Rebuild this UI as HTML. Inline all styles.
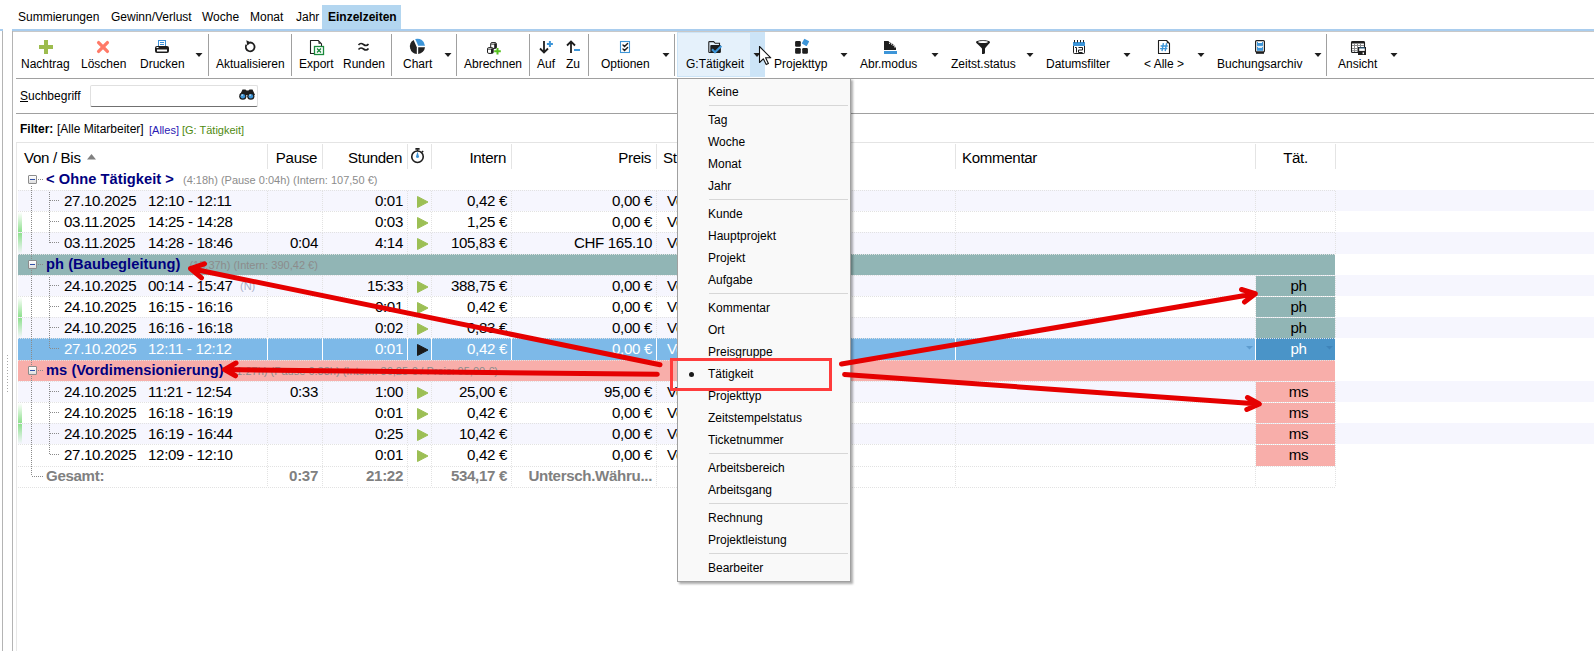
<!DOCTYPE html><html><head><meta charset="utf-8"><style>
*{box-sizing:border-box;margin:0;padding:0}
html,body{width:1594px;height:651px;overflow:hidden;background:#fff;font-family:'Liberation Sans',sans-serif;color:#000}
.a{position:absolute}
.t12{font-size:12px;line-height:14px;white-space:nowrap}
.g{font-size:15.1px;line-height:17px;white-space:nowrap;letter-spacing:-0.33px}
.r{text-align:right}
</style></head><body><div class="a " style="left:0px;top:29px;width:3px;height:2px;background:#a9cdee"></div>
<div class="a " style="left:2px;top:31px;width:1px;height:620px;background:#b4b4b4"></div>
<div class="a " style="left:12px;top:29px;width:1582px;height:2px;background:#a9cdee"></div>
<div class="a " style="left:12px;top:31px;width:1582px;height:1px;background:#c8c8c8"></div>
<div class="a " style="left:12px;top:31px;width:1px;height:620px;background:#b4b4b4"></div>
<div class="a " style="left:16px;top:142px;width:1px;height:509px;background:#e8e8e8"></div>
<div class="a " style="left:7px;top:355px;width:1px;height:38px;background:repeating-linear-gradient(180deg,#a8a8a8 0 1px,transparent 1px 3px)"></div>
<div class="a " style="left:322px;top:5px;width:79px;height:24px;background:#b3d6f0"></div>
<div class="a t12" style="left:18px;top:10px;">Summierungen</div>
<div class="a t12" style="left:111px;top:10px;">Gewinn/Verlust</div>
<div class="a t12" style="left:202px;top:10px;">Woche</div>
<div class="a t12" style="left:250px;top:10px;">Monat</div>
<div class="a t12" style="left:296px;top:10px;">Jahr</div>
<div class="a t12" style="left:328px;top:10px;font-weight:bold;">Einzelzeiten</div>
<div class="a " style="left:16px;top:78px;width:1578px;height:1px;background:#a0a0a0"></div>
<div class="a " style="left:208px;top:34px;width:1px;height:42px;background:#a0a0a0"></div>
<div class="a " style="left:291px;top:34px;width:1px;height:42px;background:#a0a0a0"></div>
<div class="a " style="left:391px;top:34px;width:1px;height:42px;background:#a0a0a0"></div>
<div class="a " style="left:456px;top:34px;width:1px;height:42px;background:#a0a0a0"></div>
<div class="a " style="left:529px;top:34px;width:1px;height:42px;background:#a0a0a0"></div>
<div class="a " style="left:588px;top:34px;width:1px;height:42px;background:#a0a0a0"></div>
<div class="a " style="left:674px;top:34px;width:1px;height:42px;background:#a0a0a0"></div>
<div class="a " style="left:1326px;top:34px;width:1px;height:42px;background:#a0a0a0"></div>
<div class="a " style="left:677px;top:32px;width:88px;height:45px;background:#e5f1fb;border:1px solid #cce4f7"></div>
<div class="a " style="left:750px;top:32px;width:15px;height:45px;background:#cce4f7"></div>
<div class="a t12" style="left:21px;top:57px;">Nachtrag</div>
<div class="a t12" style="left:81px;top:57px;">Löschen</div>
<div class="a t12" style="left:140px;top:57px;">Drucken</div>
<div class="a t12" style="left:216px;top:57px;">Aktualisieren</div>
<div class="a t12" style="left:299px;top:57px;">Export</div>
<div class="a t12" style="left:343px;top:57px;">Runden</div>
<div class="a t12" style="left:403px;top:57px;">Chart</div>
<div class="a t12" style="left:464px;top:57px;">Abrechnen</div>
<div class="a t12" style="left:537px;top:57px;">Auf</div>
<div class="a t12" style="left:566px;top:57px;">Zu</div>
<div class="a t12" style="left:601px;top:57px;">Optionen</div>
<div class="a t12" style="left:686px;top:57px;">G:Tätigkeit</div>
<div class="a t12" style="left:774px;top:57px;">Projekttyp</div>
<div class="a t12" style="left:860px;top:57px;">Abr.modus</div>
<div class="a t12" style="left:951px;top:57px;">Zeitst.status</div>
<div class="a t12" style="left:1046px;top:57px;">Datumsfilter</div>
<div class="a t12" style="left:1144px;top:57px;">&lt; Alle &gt;</div>
<div class="a t12" style="left:1217px;top:57px;">Buchungsarchiv</div>
<div class="a t12" style="left:1338px;top:57px;">Ansicht</div>
<svg class="a" style="left:195px;top:53px" width="8" height="5"><path d="M0.5 0H7.5L4 4Z" fill="#1e1e1e"/></svg>
<svg class="a" style="left:443.5px;top:53px" width="8" height="5"><path d="M0.5 0H7.5L4 4Z" fill="#1e1e1e"/></svg>
<svg class="a" style="left:661.5px;top:53px" width="8" height="5"><path d="M0.5 0H7.5L4 4Z" fill="#1e1e1e"/></svg>
<svg class="a" style="left:753px;top:53px" width="8" height="5"><path d="M0.5 0H7.5L4 4Z" fill="#1e1e1e"/></svg>
<svg class="a" style="left:839.5px;top:53px" width="8" height="5"><path d="M0.5 0H7.5L4 4Z" fill="#1e1e1e"/></svg>
<svg class="a" style="left:930.5px;top:53px" width="8" height="5"><path d="M0.5 0H7.5L4 4Z" fill="#1e1e1e"/></svg>
<svg class="a" style="left:1025.5px;top:53px" width="8" height="5"><path d="M0.5 0H7.5L4 4Z" fill="#1e1e1e"/></svg>
<svg class="a" style="left:1122.5px;top:53px" width="8" height="5"><path d="M0.5 0H7.5L4 4Z" fill="#1e1e1e"/></svg>
<svg class="a" style="left:1196.5px;top:53px" width="8" height="5"><path d="M0.5 0H7.5L4 4Z" fill="#1e1e1e"/></svg>
<svg class="a" style="left:1313.5px;top:53px" width="8" height="5"><path d="M0.5 0H7.5L4 4Z" fill="#1e1e1e"/></svg>
<svg class="a" style="left:1389.5px;top:53px" width="8" height="5"><path d="M0.5 0H7.5L4 4Z" fill="#1e1e1e"/></svg>

<svg class="a" style="left:0;top:0" width="1594" height="120">
<!-- plus -->
<path d="M44 40h4v5h5v4h-5v5h-4v-5h-5v-4h5z" fill="#9dbc4e"/>
<!-- X -->
<path d="M98.6 42.6L107.4 51.4M107.4 42.6L98.6 51.4" stroke="#ff7a68" stroke-width="3.3" stroke-linecap="round"/>
<!-- printer -->
<rect x="158.5" y="40.5" width="7" height="6" fill="#fff" stroke="#3a8fd8" stroke-width="1"/>
<path d="M160 42.5h4M160 44.5h4" stroke="#3a8fd8" stroke-width="1"/>
<rect x="155" y="46" width="14" height="7" rx="2" fill="#1e1e1e"/>
<rect x="157" y="49.5" width="10" height="2" fill="#fff"/>
<rect x="156.5" y="47" width="2" height="1" fill="#fff"/>
<!-- refresh -->
<path d="M250 42.5A4.4 4.4 0 1 1 246.4 44.6" fill="none" stroke="#1e1e1e" stroke-width="1.8"/>
<path d="M246.3 40.2L251.2 42.6L247.3 45.6Z" fill="#1e1e1e"/>
<!-- export doc -->
<path d="M314 53.5H310.5V40.5H318.2L321.5 43.8V46.5" fill="none" stroke="#1e1e1e" stroke-width="1.1" stroke-linejoin="round"/>
<path d="M318.5 41.5V43.8H320.8Z" fill="#1e1e1e"/>
<rect x="314.5" y="46.5" width="9" height="8" fill="#fff" stroke="#1a8a3c" stroke-width="1.3"/>
<path d="M317 48.5l4 4M321 48.5l-4 4" stroke="#1a8a3c" stroke-width="1.4"/>
<!-- approx -->
<path d="M358.5 45c1.5-2 3-2 5 -0.5s3.5 1.5 5-0.5M358.5 49.5c1.5-2 3-2 5-0.5s3.5 1.5 5-0.5" fill="none" stroke="#1e1e1e" stroke-width="1.6"/>
<!-- pie -->
<path d="M418.2 45.8L415.2 39.1A7.5 7.5 0 0 1 425 45.8Z" fill="#3d95d8"/>
<path d="M418.2 47.2H425A7.5 7.5 0 0 1 418.2 54Z" fill="#222"/>
<path d="M416.8 47.2V54A7.5 7.5 0 0 1 413.6 40.1Z" fill="#222"/>
<!-- abrechnen cubes -->
<rect x="490.7" y="42.6" width="5.6" height="5.8" rx="1.3" fill="#fff" stroke="#1e1e1e" stroke-width="1"/>
<rect x="494.2" y="43.6" width="2.3" height="4.6" fill="#1e1e1e"/>
<path d="M491.2 44.2h4.6" stroke="#1e1e1e" stroke-width="0.8"/>
<rect x="487.5" y="47.6" width="5.6" height="5.8" rx="1.3" fill="#fff" stroke="#1e1e1e" stroke-width="1"/>
<rect x="491" y="48.6" width="2.3" height="4.6" fill="#1e1e1e"/>
<path d="M488 49.2h4.6" stroke="#1e1e1e" stroke-width="0.8"/>
<path d="M497.5 48v6.6M494.2 51.3h6.6" stroke="#55c11e" stroke-width="2"/>
<!-- auf -->
<path d="M544 41v11.5M540 48.5l4 4l4-4" fill="none" stroke="#1e1e1e" stroke-width="1.8"/>
<path d="M549.9 41v6M546.9 44h6" stroke="#3d95d8" stroke-width="2"/>
<!-- zu -->
<path d="M571 53V41.5M567 45.5l4-4l4 4" fill="none" stroke="#1e1e1e" stroke-width="1.8"/>
<path d="M574 50h6" stroke="#3d95d8" stroke-width="2"/>
<!-- optionen -->
<rect x="620.5" y="41.5" width="9" height="11" fill="#fff" stroke="#3d95d8" stroke-width="1.1"/>
<path d="M623 45.1L624.5 46.5L627.6 43.4M623 49.1L624.5 50.5L627.6 47.4" fill="none" stroke="#1e1e1e" stroke-width="1.4" stroke-linecap="round"/>
<!-- folder -->
<path d="M711 52.5H709.5C709 52.5 708.8 52.2 708.8 51.7V42.3C708.8 41.8 709 41.6 709.5 41.6H713.6L715.2 43.3H719.5V45" fill="none" stroke="#1e1e1e" stroke-width="1.1"/>
<rect x="710.3" y="45.1" width="10.6" height="7.8" rx="0.8" fill="#1e1e1e"/>
<path d="M712 49.3L715 52.2L721.4 46" fill="none" stroke="#3d95d8" stroke-width="2.1"/>
<!-- projekttyp -->
<rect x="795.1" y="41.1" width="5.7" height="5.6" rx="1.2" fill="#1e1e1e"/>
<rect x="795.1" y="48.1" width="5.7" height="5.6" rx="1.2" fill="#1e1e1e"/>
<rect x="802.2" y="48.1" width="5.7" height="5.6" rx="1.2" fill="#1e1e1e"/>
<rect x="802.7" y="39.6" width="5.6" height="5.6" rx="0.6" fill="#3d95d8" transform="rotate(28 805.5 42.4)"/>
<!-- abr.modus -->
<path d="M884 41h4.5l0.8 1.3c2.5 0.6 5.5 2.8 6.7 6v1.7h-12z" fill="#1e1e1e"/>
<g fill="#fff"><circle cx="889.6" cy="43.3" r="0.65"/><circle cx="891.6" cy="44" r="0.65"/><circle cx="893.3" cy="45.2" r="0.65"/><circle cx="894.6" cy="46.8" r="0.65"/></g>
<rect x="884" y="51" width="13" height="3" fill="#3d95d8"/>
<!-- funnel -->
<path d="M976 42.3c0-2.6 14-2.6 14 0c0 1-4.5 5-5 6.5v4c0 1-1 1.3-2.2 1.3h-0.8v-5.3c-0.5-1.5-6-5.5-6-6.5z" fill="#1e1e1e"/>
<ellipse cx="983" cy="42" rx="4.8" ry="1" fill="#fff"/>
<!-- calendar -->
<rect x="1073.5" y="42.5" width="11" height="11" rx="0.8" fill="#fff" stroke="#1e1e1e" stroke-width="1"/>
<rect x="1073" y="42" width="12" height="4" fill="#3d95d8"/>
<path d="M1074.5 40v2.5M1077.5 40v2.5M1080.5 40v2.5M1083.5 40v2.5" stroke="#1e1e1e" stroke-width="1"/>
<path d="M1075 47.5h1.5v5" fill="none" stroke="#1e1e1e" stroke-width="1"/>
<path d="M1078.5 47.5h4v2.5h-4v2.5h4" fill="none" stroke="#1e1e1e" stroke-width="1"/>
<!-- # doc -->
<path d="M1158.5 53.5V40.5H1166.5L1169.5 43.5V53.5Z" fill="#fff" stroke="#1e1e1e" stroke-width="1.1" stroke-linejoin="round"/>
<path d="M1166.8 41.2V43.2H1168.8Z" fill="#1e1e1e"/>
<path d="M1163.4 43.2L1162 51.2M1166.6 43.2L1165.2 51.2M1160.6 46H1167.8M1160.1 48.6H1167.3" stroke="#3d95d8" stroke-width="1.4"/>
<!-- archive -->
<rect x="1255.6" y="40.6" width="8.8" height="11.3" rx="1" fill="#fff" stroke="#1e1e1e" stroke-width="1.2"/>
<rect x="1257" y="42" width="6" height="3.9" fill="#3d95d8"/>
<rect x="1257" y="46.8" width="6" height="4" fill="#3d95d8"/>
<rect x="1258" y="42" width="4" height="1" fill="#fff"/>
<rect x="1258" y="46.8" width="4" height="1" fill="#fff"/>
<rect x="1256" y="52" width="8" height="1.8" fill="#1e1e1e"/>
<!-- ansicht -->
<rect x="1351.5" y="41.5" width="13" height="11" rx="1" fill="#fff" stroke="#1e1e1e" stroke-width="1.1"/>
<rect x="1351.5" y="41.5" width="13" height="2" fill="#1e1e1e"/>
<path d="M1354.5 43v9M1357.5 43v9M1360.5 43v9M1352 45.5h12M1352 48.5h12M1352 50.7h12" stroke="#8a8a8a" stroke-width="1"/>
<rect x="1358" y="47" width="8" height="8" fill="#1e1e1e"/>
<rect x="1359.2" y="47.6" width="5.6" height="0.9" fill="#3d95d8"/>
<rect x="1359.2" y="48.5" width="5.6" height="2.4" fill="#fff"/>
<rect x="1362.6" y="52.4" width="1.4" height="1.8" fill="#fff"/>
</svg>
<div class="a t12" style="left:20px;top:89px;"><u>S</u>uchbegriff</div>
<div class="a " style="left:90px;top:85px;width:168px;height:22px;background:#fff;border:1px solid #e0e0e0;border-bottom:1px solid #707070;border-radius:2px"></div>
<div class="a " style="left:16px;top:113px;width:1578px;height:1px;background:#a0a0a0"></div>
<div class="a t12" style="left:20px;top:122px;font-weight:bold">Filter:</div>
<div class="a t12" style="left:57px;top:122px;">[Alle Mitarbeiter]</div>
<div class="a t12" style="left:149px;top:123px;color:#2a1ab4;font-size:11px">[Alles]</div>
<div class="a t12" style="left:182px;top:123px;color:#4f8a10;font-size:11px">[G: Tätigkeit]</div>
<div class="a " style="left:16px;top:142px;width:1578px;height:1px;background:#e4e4e4"></div>
<div class="a " style="left:267px;top:144px;width:1px;height:25px;background:#e4e4e4"></div>
<div class="a " style="left:322px;top:144px;width:1px;height:25px;background:#e4e4e4"></div>
<div class="a " style="left:407px;top:144px;width:1px;height:25px;background:#e4e4e4"></div>
<div class="a " style="left:431px;top:144px;width:1px;height:25px;background:#e4e4e4"></div>
<div class="a " style="left:511px;top:144px;width:1px;height:25px;background:#e4e4e4"></div>
<div class="a " style="left:656px;top:144px;width:1px;height:25px;background:#e4e4e4"></div>
<div class="a " style="left:955px;top:144px;width:1px;height:25px;background:#e4e4e4"></div>
<div class="a " style="left:1255px;top:144px;width:1px;height:25px;background:#e4e4e4"></div>
<div class="a " style="left:1335px;top:144px;width:1px;height:25px;background:#e4e4e4"></div>
<div class="a g" style="left:24px;top:149px;">Von / Bis</div>
<svg class="a" style="left:87px;top:154px" width="10" height="6"><path d="M0 5.5H9L4.5 0Z" fill="#808080"/></svg>
<div class="a g r" style="left:267px;top:149px;width:50px;">Pause</div>
<div class="a g r" style="left:322px;top:149px;width:80px;">Stunden</div>
<div class="a g r" style="left:431px;top:149px;width:75px;">Intern</div>
<div class="a g r" style="left:511px;top:149px;width:140px;">Preis</div>
<div class="a g" style="left:663px;top:149px;">St</div>
<div class="a g" style="left:962px;top:149px;">Kommentar</div>
<div class="a g" style="left:1256px;top:149px;width:79px;text-align:center">Tät.</div>
<svg class="a" style="left:404px;top:144px" width="30" height="24"><circle cx="13.5" cy="12.7" r="5.75" fill="none" stroke="#1e1e1e" stroke-width="1.6"/><rect x="11.3" y="3.9" width="4.4" height="1.9" rx="0.5" fill="#1e1e1e"/><path d="M13.5 5.5v1.6M17.9 8.3l1.3-1.3" stroke="#1e1e1e" stroke-width="1.4"/><path d="M13.5 7.6L14.9 12.2A1.45 1.45 0 1 1 12.1 12.2Z" fill="#3a92d6"/></svg>
<div class="a " style="left:18px;top:190px;width:1576px;height:21px;background:#f6f6fe"></div>
<div class="a " style="left:18px;top:232px;width:1576px;height:22px;background:#f6f6fe"></div>
<div class="a " style="left:18px;top:254px;width:1317px;height:21px;background:#91b5b5"></div>
<div class="a " style="left:18px;top:275px;width:1576px;height:21px;background:#f6f6fe"></div>
<div class="a " style="left:1256px;top:276px;width:79px;height:20px;background:#91b5b5"></div>
<div class="a " style="left:1256px;top:297px;width:79px;height:20px;background:#91b5b5"></div>
<div class="a " style="left:18px;top:317px;width:1576px;height:21px;background:#f6f6fe"></div>
<div class="a " style="left:1256px;top:318px;width:79px;height:20px;background:#91b5b5"></div>
<div class="a " style="left:18px;top:338px;width:1317px;height:22px;background:#7db9e8"></div>
<div class="a " style="left:1256px;top:338px;width:79px;height:22px;background:#4a94c8"></div>
<div class="a " style="left:18px;top:360px;width:1317px;height:21px;background:#f8aeaa"></div>
<div class="a " style="left:18px;top:381px;width:1576px;height:21px;background:#f6f6fe"></div>
<div class="a " style="left:1256px;top:382px;width:79px;height:20px;background:#f8aeaa"></div>
<div class="a " style="left:1256px;top:403px;width:79px;height:20px;background:#f8aeaa"></div>
<div class="a " style="left:18px;top:423px;width:1576px;height:21px;background:#f6f6fe"></div>
<div class="a " style="left:1256px;top:424px;width:79px;height:20px;background:#f8aeaa"></div>
<div class="a " style="left:1256px;top:445px;width:79px;height:21px;background:#f8aeaa"></div>
<div class="a " style="left:18px;top:190px;width:1317px;height:1px;background:repeating-linear-gradient(90deg,#e2e2e2 0 1px,transparent 1px 2px)"></div>
<div class="a " style="left:18px;top:211px;width:1317px;height:1px;background:repeating-linear-gradient(90deg,#e2e2e2 0 1px,transparent 1px 2px)"></div>
<div class="a " style="left:18px;top:232px;width:1317px;height:1px;background:repeating-linear-gradient(90deg,#e2e2e2 0 1px,transparent 1px 2px)"></div>
<div class="a " style="left:18px;top:254px;width:1317px;height:1px;background:repeating-linear-gradient(90deg,#e2e2e2 0 1px,transparent 1px 2px)"></div>
<div class="a " style="left:18px;top:275px;width:1317px;height:1px;background:repeating-linear-gradient(90deg,#e2e2e2 0 1px,transparent 1px 2px)"></div>
<div class="a " style="left:18px;top:296px;width:1317px;height:1px;background:repeating-linear-gradient(90deg,#e2e2e2 0 1px,transparent 1px 2px)"></div>
<div class="a " style="left:18px;top:317px;width:1317px;height:1px;background:repeating-linear-gradient(90deg,#e2e2e2 0 1px,transparent 1px 2px)"></div>
<div class="a " style="left:18px;top:338px;width:1317px;height:1px;background:repeating-linear-gradient(90deg,#e2e2e2 0 1px,transparent 1px 2px)"></div>
<div class="a " style="left:18px;top:360px;width:1317px;height:1px;background:repeating-linear-gradient(90deg,#e2e2e2 0 1px,transparent 1px 2px)"></div>
<div class="a " style="left:18px;top:381px;width:1317px;height:1px;background:repeating-linear-gradient(90deg,#e2e2e2 0 1px,transparent 1px 2px)"></div>
<div class="a " style="left:18px;top:402px;width:1317px;height:1px;background:repeating-linear-gradient(90deg,#e2e2e2 0 1px,transparent 1px 2px)"></div>
<div class="a " style="left:18px;top:423px;width:1317px;height:1px;background:repeating-linear-gradient(90deg,#e2e2e2 0 1px,transparent 1px 2px)"></div>
<div class="a " style="left:18px;top:444px;width:1317px;height:1px;background:repeating-linear-gradient(90deg,#e2e2e2 0 1px,transparent 1px 2px)"></div>
<div class="a " style="left:18px;top:466px;width:1317px;height:1px;background:repeating-linear-gradient(90deg,#e2e2e2 0 1px,transparent 1px 2px)"></div>
<div class="a " style="left:18px;top:487px;width:1317px;height:1px;background:repeating-linear-gradient(90deg,#e2e2e2 0 1px,transparent 1px 2px)"></div>
<div class="a " style="left:267px;top:191px;width:1px;height:20px;background:repeating-linear-gradient(180deg,#e2e2e2 0 1px,transparent 1px 2px)"></div>
<div class="a " style="left:322px;top:191px;width:1px;height:20px;background:repeating-linear-gradient(180deg,#e2e2e2 0 1px,transparent 1px 2px)"></div>
<div class="a " style="left:407px;top:191px;width:1px;height:20px;background:repeating-linear-gradient(180deg,#e2e2e2 0 1px,transparent 1px 2px)"></div>
<div class="a " style="left:431px;top:191px;width:1px;height:20px;background:repeating-linear-gradient(180deg,#e2e2e2 0 1px,transparent 1px 2px)"></div>
<div class="a " style="left:511px;top:191px;width:1px;height:20px;background:repeating-linear-gradient(180deg,#e2e2e2 0 1px,transparent 1px 2px)"></div>
<div class="a " style="left:656px;top:191px;width:1px;height:20px;background:repeating-linear-gradient(180deg,#e2e2e2 0 1px,transparent 1px 2px)"></div>
<div class="a " style="left:955px;top:191px;width:1px;height:20px;background:repeating-linear-gradient(180deg,#e2e2e2 0 1px,transparent 1px 2px)"></div>
<div class="a " style="left:1255px;top:191px;width:1px;height:20px;background:repeating-linear-gradient(180deg,#e2e2e2 0 1px,transparent 1px 2px)"></div>
<div class="a " style="left:1335px;top:191px;width:1px;height:20px;background:repeating-linear-gradient(180deg,#e2e2e2 0 1px,transparent 1px 2px)"></div>
<div class="a " style="left:267px;top:212px;width:1px;height:20px;background:repeating-linear-gradient(180deg,#e2e2e2 0 1px,transparent 1px 2px)"></div>
<div class="a " style="left:322px;top:212px;width:1px;height:20px;background:repeating-linear-gradient(180deg,#e2e2e2 0 1px,transparent 1px 2px)"></div>
<div class="a " style="left:407px;top:212px;width:1px;height:20px;background:repeating-linear-gradient(180deg,#e2e2e2 0 1px,transparent 1px 2px)"></div>
<div class="a " style="left:431px;top:212px;width:1px;height:20px;background:repeating-linear-gradient(180deg,#e2e2e2 0 1px,transparent 1px 2px)"></div>
<div class="a " style="left:511px;top:212px;width:1px;height:20px;background:repeating-linear-gradient(180deg,#e2e2e2 0 1px,transparent 1px 2px)"></div>
<div class="a " style="left:656px;top:212px;width:1px;height:20px;background:repeating-linear-gradient(180deg,#e2e2e2 0 1px,transparent 1px 2px)"></div>
<div class="a " style="left:955px;top:212px;width:1px;height:20px;background:repeating-linear-gradient(180deg,#e2e2e2 0 1px,transparent 1px 2px)"></div>
<div class="a " style="left:1255px;top:212px;width:1px;height:20px;background:repeating-linear-gradient(180deg,#e2e2e2 0 1px,transparent 1px 2px)"></div>
<div class="a " style="left:1335px;top:212px;width:1px;height:20px;background:repeating-linear-gradient(180deg,#e2e2e2 0 1px,transparent 1px 2px)"></div>
<div class="a " style="left:267px;top:233px;width:1px;height:21px;background:repeating-linear-gradient(180deg,#e2e2e2 0 1px,transparent 1px 2px)"></div>
<div class="a " style="left:322px;top:233px;width:1px;height:21px;background:repeating-linear-gradient(180deg,#e2e2e2 0 1px,transparent 1px 2px)"></div>
<div class="a " style="left:407px;top:233px;width:1px;height:21px;background:repeating-linear-gradient(180deg,#e2e2e2 0 1px,transparent 1px 2px)"></div>
<div class="a " style="left:431px;top:233px;width:1px;height:21px;background:repeating-linear-gradient(180deg,#e2e2e2 0 1px,transparent 1px 2px)"></div>
<div class="a " style="left:511px;top:233px;width:1px;height:21px;background:repeating-linear-gradient(180deg,#e2e2e2 0 1px,transparent 1px 2px)"></div>
<div class="a " style="left:656px;top:233px;width:1px;height:21px;background:repeating-linear-gradient(180deg,#e2e2e2 0 1px,transparent 1px 2px)"></div>
<div class="a " style="left:955px;top:233px;width:1px;height:21px;background:repeating-linear-gradient(180deg,#e2e2e2 0 1px,transparent 1px 2px)"></div>
<div class="a " style="left:1255px;top:233px;width:1px;height:21px;background:repeating-linear-gradient(180deg,#e2e2e2 0 1px,transparent 1px 2px)"></div>
<div class="a " style="left:1335px;top:233px;width:1px;height:21px;background:repeating-linear-gradient(180deg,#e2e2e2 0 1px,transparent 1px 2px)"></div>
<div class="a " style="left:267px;top:276px;width:1px;height:20px;background:repeating-linear-gradient(180deg,#e2e2e2 0 1px,transparent 1px 2px)"></div>
<div class="a " style="left:322px;top:276px;width:1px;height:20px;background:repeating-linear-gradient(180deg,#e2e2e2 0 1px,transparent 1px 2px)"></div>
<div class="a " style="left:407px;top:276px;width:1px;height:20px;background:repeating-linear-gradient(180deg,#e2e2e2 0 1px,transparent 1px 2px)"></div>
<div class="a " style="left:431px;top:276px;width:1px;height:20px;background:repeating-linear-gradient(180deg,#e2e2e2 0 1px,transparent 1px 2px)"></div>
<div class="a " style="left:511px;top:276px;width:1px;height:20px;background:repeating-linear-gradient(180deg,#e2e2e2 0 1px,transparent 1px 2px)"></div>
<div class="a " style="left:656px;top:276px;width:1px;height:20px;background:repeating-linear-gradient(180deg,#e2e2e2 0 1px,transparent 1px 2px)"></div>
<div class="a " style="left:955px;top:276px;width:1px;height:20px;background:repeating-linear-gradient(180deg,#e2e2e2 0 1px,transparent 1px 2px)"></div>
<div class="a " style="left:1255px;top:276px;width:1px;height:20px;background:repeating-linear-gradient(180deg,#e2e2e2 0 1px,transparent 1px 2px)"></div>
<div class="a " style="left:1335px;top:276px;width:1px;height:20px;background:repeating-linear-gradient(180deg,#e2e2e2 0 1px,transparent 1px 2px)"></div>
<div class="a " style="left:267px;top:297px;width:1px;height:20px;background:repeating-linear-gradient(180deg,#e2e2e2 0 1px,transparent 1px 2px)"></div>
<div class="a " style="left:322px;top:297px;width:1px;height:20px;background:repeating-linear-gradient(180deg,#e2e2e2 0 1px,transparent 1px 2px)"></div>
<div class="a " style="left:407px;top:297px;width:1px;height:20px;background:repeating-linear-gradient(180deg,#e2e2e2 0 1px,transparent 1px 2px)"></div>
<div class="a " style="left:431px;top:297px;width:1px;height:20px;background:repeating-linear-gradient(180deg,#e2e2e2 0 1px,transparent 1px 2px)"></div>
<div class="a " style="left:511px;top:297px;width:1px;height:20px;background:repeating-linear-gradient(180deg,#e2e2e2 0 1px,transparent 1px 2px)"></div>
<div class="a " style="left:656px;top:297px;width:1px;height:20px;background:repeating-linear-gradient(180deg,#e2e2e2 0 1px,transparent 1px 2px)"></div>
<div class="a " style="left:955px;top:297px;width:1px;height:20px;background:repeating-linear-gradient(180deg,#e2e2e2 0 1px,transparent 1px 2px)"></div>
<div class="a " style="left:1255px;top:297px;width:1px;height:20px;background:repeating-linear-gradient(180deg,#e2e2e2 0 1px,transparent 1px 2px)"></div>
<div class="a " style="left:1335px;top:297px;width:1px;height:20px;background:repeating-linear-gradient(180deg,#e2e2e2 0 1px,transparent 1px 2px)"></div>
<div class="a " style="left:267px;top:318px;width:1px;height:20px;background:repeating-linear-gradient(180deg,#e2e2e2 0 1px,transparent 1px 2px)"></div>
<div class="a " style="left:322px;top:318px;width:1px;height:20px;background:repeating-linear-gradient(180deg,#e2e2e2 0 1px,transparent 1px 2px)"></div>
<div class="a " style="left:407px;top:318px;width:1px;height:20px;background:repeating-linear-gradient(180deg,#e2e2e2 0 1px,transparent 1px 2px)"></div>
<div class="a " style="left:431px;top:318px;width:1px;height:20px;background:repeating-linear-gradient(180deg,#e2e2e2 0 1px,transparent 1px 2px)"></div>
<div class="a " style="left:511px;top:318px;width:1px;height:20px;background:repeating-linear-gradient(180deg,#e2e2e2 0 1px,transparent 1px 2px)"></div>
<div class="a " style="left:656px;top:318px;width:1px;height:20px;background:repeating-linear-gradient(180deg,#e2e2e2 0 1px,transparent 1px 2px)"></div>
<div class="a " style="left:955px;top:318px;width:1px;height:20px;background:repeating-linear-gradient(180deg,#e2e2e2 0 1px,transparent 1px 2px)"></div>
<div class="a " style="left:1255px;top:318px;width:1px;height:20px;background:repeating-linear-gradient(180deg,#e2e2e2 0 1px,transparent 1px 2px)"></div>
<div class="a " style="left:1335px;top:318px;width:1px;height:20px;background:repeating-linear-gradient(180deg,#e2e2e2 0 1px,transparent 1px 2px)"></div>
<div class="a " style="left:267px;top:382px;width:1px;height:20px;background:repeating-linear-gradient(180deg,#e2e2e2 0 1px,transparent 1px 2px)"></div>
<div class="a " style="left:322px;top:382px;width:1px;height:20px;background:repeating-linear-gradient(180deg,#e2e2e2 0 1px,transparent 1px 2px)"></div>
<div class="a " style="left:407px;top:382px;width:1px;height:20px;background:repeating-linear-gradient(180deg,#e2e2e2 0 1px,transparent 1px 2px)"></div>
<div class="a " style="left:431px;top:382px;width:1px;height:20px;background:repeating-linear-gradient(180deg,#e2e2e2 0 1px,transparent 1px 2px)"></div>
<div class="a " style="left:511px;top:382px;width:1px;height:20px;background:repeating-linear-gradient(180deg,#e2e2e2 0 1px,transparent 1px 2px)"></div>
<div class="a " style="left:656px;top:382px;width:1px;height:20px;background:repeating-linear-gradient(180deg,#e2e2e2 0 1px,transparent 1px 2px)"></div>
<div class="a " style="left:955px;top:382px;width:1px;height:20px;background:repeating-linear-gradient(180deg,#e2e2e2 0 1px,transparent 1px 2px)"></div>
<div class="a " style="left:1255px;top:382px;width:1px;height:20px;background:repeating-linear-gradient(180deg,#e2e2e2 0 1px,transparent 1px 2px)"></div>
<div class="a " style="left:1335px;top:382px;width:1px;height:20px;background:repeating-linear-gradient(180deg,#e2e2e2 0 1px,transparent 1px 2px)"></div>
<div class="a " style="left:267px;top:403px;width:1px;height:20px;background:repeating-linear-gradient(180deg,#e2e2e2 0 1px,transparent 1px 2px)"></div>
<div class="a " style="left:322px;top:403px;width:1px;height:20px;background:repeating-linear-gradient(180deg,#e2e2e2 0 1px,transparent 1px 2px)"></div>
<div class="a " style="left:407px;top:403px;width:1px;height:20px;background:repeating-linear-gradient(180deg,#e2e2e2 0 1px,transparent 1px 2px)"></div>
<div class="a " style="left:431px;top:403px;width:1px;height:20px;background:repeating-linear-gradient(180deg,#e2e2e2 0 1px,transparent 1px 2px)"></div>
<div class="a " style="left:511px;top:403px;width:1px;height:20px;background:repeating-linear-gradient(180deg,#e2e2e2 0 1px,transparent 1px 2px)"></div>
<div class="a " style="left:656px;top:403px;width:1px;height:20px;background:repeating-linear-gradient(180deg,#e2e2e2 0 1px,transparent 1px 2px)"></div>
<div class="a " style="left:955px;top:403px;width:1px;height:20px;background:repeating-linear-gradient(180deg,#e2e2e2 0 1px,transparent 1px 2px)"></div>
<div class="a " style="left:1255px;top:403px;width:1px;height:20px;background:repeating-linear-gradient(180deg,#e2e2e2 0 1px,transparent 1px 2px)"></div>
<div class="a " style="left:1335px;top:403px;width:1px;height:20px;background:repeating-linear-gradient(180deg,#e2e2e2 0 1px,transparent 1px 2px)"></div>
<div class="a " style="left:267px;top:424px;width:1px;height:20px;background:repeating-linear-gradient(180deg,#e2e2e2 0 1px,transparent 1px 2px)"></div>
<div class="a " style="left:322px;top:424px;width:1px;height:20px;background:repeating-linear-gradient(180deg,#e2e2e2 0 1px,transparent 1px 2px)"></div>
<div class="a " style="left:407px;top:424px;width:1px;height:20px;background:repeating-linear-gradient(180deg,#e2e2e2 0 1px,transparent 1px 2px)"></div>
<div class="a " style="left:431px;top:424px;width:1px;height:20px;background:repeating-linear-gradient(180deg,#e2e2e2 0 1px,transparent 1px 2px)"></div>
<div class="a " style="left:511px;top:424px;width:1px;height:20px;background:repeating-linear-gradient(180deg,#e2e2e2 0 1px,transparent 1px 2px)"></div>
<div class="a " style="left:656px;top:424px;width:1px;height:20px;background:repeating-linear-gradient(180deg,#e2e2e2 0 1px,transparent 1px 2px)"></div>
<div class="a " style="left:955px;top:424px;width:1px;height:20px;background:repeating-linear-gradient(180deg,#e2e2e2 0 1px,transparent 1px 2px)"></div>
<div class="a " style="left:1255px;top:424px;width:1px;height:20px;background:repeating-linear-gradient(180deg,#e2e2e2 0 1px,transparent 1px 2px)"></div>
<div class="a " style="left:1335px;top:424px;width:1px;height:20px;background:repeating-linear-gradient(180deg,#e2e2e2 0 1px,transparent 1px 2px)"></div>
<div class="a " style="left:267px;top:445px;width:1px;height:21px;background:repeating-linear-gradient(180deg,#e2e2e2 0 1px,transparent 1px 2px)"></div>
<div class="a " style="left:322px;top:445px;width:1px;height:21px;background:repeating-linear-gradient(180deg,#e2e2e2 0 1px,transparent 1px 2px)"></div>
<div class="a " style="left:407px;top:445px;width:1px;height:21px;background:repeating-linear-gradient(180deg,#e2e2e2 0 1px,transparent 1px 2px)"></div>
<div class="a " style="left:431px;top:445px;width:1px;height:21px;background:repeating-linear-gradient(180deg,#e2e2e2 0 1px,transparent 1px 2px)"></div>
<div class="a " style="left:511px;top:445px;width:1px;height:21px;background:repeating-linear-gradient(180deg,#e2e2e2 0 1px,transparent 1px 2px)"></div>
<div class="a " style="left:656px;top:445px;width:1px;height:21px;background:repeating-linear-gradient(180deg,#e2e2e2 0 1px,transparent 1px 2px)"></div>
<div class="a " style="left:955px;top:445px;width:1px;height:21px;background:repeating-linear-gradient(180deg,#e2e2e2 0 1px,transparent 1px 2px)"></div>
<div class="a " style="left:1255px;top:445px;width:1px;height:21px;background:repeating-linear-gradient(180deg,#e2e2e2 0 1px,transparent 1px 2px)"></div>
<div class="a " style="left:1335px;top:445px;width:1px;height:21px;background:repeating-linear-gradient(180deg,#e2e2e2 0 1px,transparent 1px 2px)"></div>
<div class="a " style="left:267px;top:467px;width:1px;height:20px;background:repeating-linear-gradient(180deg,#e2e2e2 0 1px,transparent 1px 2px)"></div>
<div class="a " style="left:322px;top:467px;width:1px;height:20px;background:repeating-linear-gradient(180deg,#e2e2e2 0 1px,transparent 1px 2px)"></div>
<div class="a " style="left:407px;top:467px;width:1px;height:20px;background:repeating-linear-gradient(180deg,#e2e2e2 0 1px,transparent 1px 2px)"></div>
<div class="a " style="left:431px;top:467px;width:1px;height:20px;background:repeating-linear-gradient(180deg,#e2e2e2 0 1px,transparent 1px 2px)"></div>
<div class="a " style="left:511px;top:467px;width:1px;height:20px;background:repeating-linear-gradient(180deg,#e2e2e2 0 1px,transparent 1px 2px)"></div>
<div class="a " style="left:656px;top:467px;width:1px;height:20px;background:repeating-linear-gradient(180deg,#e2e2e2 0 1px,transparent 1px 2px)"></div>
<div class="a " style="left:955px;top:467px;width:1px;height:20px;background:repeating-linear-gradient(180deg,#e2e2e2 0 1px,transparent 1px 2px)"></div>
<div class="a " style="left:1255px;top:467px;width:1px;height:20px;background:repeating-linear-gradient(180deg,#e2e2e2 0 1px,transparent 1px 2px)"></div>
<div class="a " style="left:1335px;top:467px;width:1px;height:20px;background:repeating-linear-gradient(180deg,#e2e2e2 0 1px,transparent 1px 2px)"></div>
<div class="a " style="left:267px;top:338px;width:1px;height:22px;background:#fff"></div>
<div class="a " style="left:322px;top:338px;width:1px;height:22px;background:#fff"></div>
<div class="a " style="left:407px;top:338px;width:1px;height:22px;background:#fff"></div>
<div class="a " style="left:431px;top:338px;width:1px;height:22px;background:#fff"></div>
<div class="a " style="left:511px;top:338px;width:1px;height:22px;background:#fff"></div>
<div class="a " style="left:656px;top:338px;width:1px;height:22px;background:#fff"></div>
<div class="a " style="left:955px;top:338px;width:1px;height:22px;background:#fff"></div>
<div class="a " style="left:1255px;top:338px;width:1px;height:22px;background:#fff"></div>
<svg class="a" style="left:1246px;top:346px" width="8" height="5"><path d="M0 0H7L3.5 3.5Z" fill="#5d9ccf"/></svg>
<svg class="a" style="left:1326px;top:346px" width="8" height="5"><path d="M0 0H7L3.5 3.5Z" fill="#3f84b9"/></svg>
<div class="a " style="left:18px;top:212px;width:4px;height:20px;background:linear-gradient(180deg,rgba(142,224,142,0),#8ee08e)"></div>
<div class="a " style="left:18px;top:297px;width:4px;height:20px;background:linear-gradient(180deg,rgba(142,224,142,0),#8ee08e)"></div>
<div class="a " style="left:18px;top:403px;width:4px;height:20px;background:linear-gradient(180deg,rgba(142,224,142,0),#8ee08e)"></div>
<div class="a " style="left:18px;top:233px;width:4px;height:21px;background:linear-gradient(180deg,#8ee08e,rgba(142,224,142,0))"></div>
<div class="a " style="left:18px;top:318px;width:4px;height:20px;background:linear-gradient(180deg,#8ee08e,rgba(142,224,142,0))"></div>
<div class="a " style="left:18px;top:424px;width:4px;height:20px;background:linear-gradient(180deg,#8ee08e,rgba(142,224,142,0))"></div>
<div class="a " style="left:31px;top:186px;width:1px;height:290px;background:repeating-linear-gradient(180deg,#8a8a8a 0 1px,transparent 1px 2px)"></div>
<div class="a " style="left:32px;top:476px;width:11px;height:1px;background:repeating-linear-gradient(90deg,#8a8a8a 0 1px,transparent 1px 2px)"></div>
<div class="a " style="left:49px;top:192px;width:1px;height:51px;background:repeating-linear-gradient(180deg,#8a8a8a 0 1px,transparent 1px 2px)"></div>
<div class="a " style="left:50px;top:200px;width:10px;height:1px;background:repeating-linear-gradient(90deg,#8a8a8a 0 1px,transparent 1px 2px)"></div>
<div class="a " style="left:50px;top:221px;width:10px;height:1px;background:repeating-linear-gradient(90deg,#8a8a8a 0 1px,transparent 1px 2px)"></div>
<div class="a " style="left:50px;top:242px;width:10px;height:1px;background:repeating-linear-gradient(90deg,#8a8a8a 0 1px,transparent 1px 2px)"></div>
<div class="a " style="left:49px;top:277px;width:1px;height:72px;background:repeating-linear-gradient(180deg,#8a8a8a 0 1px,transparent 1px 2px)"></div>
<div class="a " style="left:50px;top:285px;width:10px;height:1px;background:repeating-linear-gradient(90deg,#8a8a8a 0 1px,transparent 1px 2px)"></div>
<div class="a " style="left:50px;top:306px;width:10px;height:1px;background:repeating-linear-gradient(90deg,#8a8a8a 0 1px,transparent 1px 2px)"></div>
<div class="a " style="left:50px;top:327px;width:10px;height:1px;background:repeating-linear-gradient(90deg,#8a8a8a 0 1px,transparent 1px 2px)"></div>
<div class="a " style="left:50px;top:348px;width:10px;height:1px;background:repeating-linear-gradient(90deg,#8a8a8a 0 1px,transparent 1px 2px)"></div>
<div class="a " style="left:49px;top:383px;width:1px;height:72px;background:repeating-linear-gradient(180deg,#8a8a8a 0 1px,transparent 1px 2px)"></div>
<div class="a " style="left:50px;top:391px;width:10px;height:1px;background:repeating-linear-gradient(90deg,#8a8a8a 0 1px,transparent 1px 2px)"></div>
<div class="a " style="left:50px;top:412px;width:10px;height:1px;background:repeating-linear-gradient(90deg,#8a8a8a 0 1px,transparent 1px 2px)"></div>
<div class="a " style="left:50px;top:433px;width:10px;height:1px;background:repeating-linear-gradient(90deg,#8a8a8a 0 1px,transparent 1px 2px)"></div>
<div class="a " style="left:50px;top:454px;width:10px;height:1px;background:repeating-linear-gradient(90deg,#8a8a8a 0 1px,transparent 1px 2px)"></div>
<div class="a g" style="left:46px;top:171px;font-weight:bold;color:#000080;letter-spacing:0.05px;font-size:14.67px">&lt; Ohne Tätigkeit &gt;</div>
<div class="a" style="left:46px;top:171px;white-space:nowrap;line-height:17px"><span class="g" style="font-weight:bold;letter-spacing:0.05px;font-size:14.67px;visibility:hidden">&lt; Ohne Tätigkeit &gt;</span><span style="color:#8c8c8c;font-size:11px;margin-left:9px;vertical-align:1px">(4:18h) (Pause 0:04h) (Intern: 107,50 €)</span></div>
<div class="a " style="left:28px;top:175px;width:9px;height:9px;border:1px solid #8c8c8c;border-radius:1px;background:linear-gradient(#fff,#dedede)"></div>
<div class="a " style="left:30px;top:179px;width:5px;height:1px;background:#3050a8"></div>
<div class="a " style="left:38px;top:179px;width:6px;height:1px;background:repeating-linear-gradient(90deg,#8a8a8a 0 1px,transparent 1px 2px)"></div>
<div class="a g" style="left:64px;top:192px;color:#000">27.10.2025</div>
<div class="a g" style="left:148px;top:192px;color:#000">12:10 - 12:11</div>
<div class="a g r" style="left:267px;top:192px;width:51px;color:#000"></div>
<div class="a g r" style="left:322px;top:192px;width:81px;color:#000">0:01</div>
<div class="a g r" style="left:431px;top:192px;width:76px;color:#000">0,42 €</div>
<div class="a g r" style="left:511px;top:192px;width:141px;color:#000">0,00 €</div>
<div class="a g" style="left:667px;top:192px;color:#000">Ve</div>
<svg class="a" style="left:416px;top:195px" width="14" height="14"><path d="M1.5 1.5L12 7L1.5 12.5Z" fill="#9cbf55" stroke="#9cbf55" stroke-width="1" stroke-linejoin="round"/></svg>
<div class="a g" style="left:64px;top:213px;color:#000">03.11.2025</div>
<div class="a g" style="left:148px;top:213px;color:#000">14:25 - 14:28</div>
<div class="a g r" style="left:267px;top:213px;width:51px;color:#000"></div>
<div class="a g r" style="left:322px;top:213px;width:81px;color:#000">0:03</div>
<div class="a g r" style="left:431px;top:213px;width:76px;color:#000">1,25 €</div>
<div class="a g r" style="left:511px;top:213px;width:141px;color:#000">0,00 €</div>
<div class="a g" style="left:667px;top:213px;color:#000">Ve</div>
<svg class="a" style="left:416px;top:216px" width="14" height="14"><path d="M1.5 1.5L12 7L1.5 12.5Z" fill="#9cbf55" stroke="#9cbf55" stroke-width="1" stroke-linejoin="round"/></svg>
<div class="a g" style="left:64px;top:234px;color:#000">03.11.2025</div>
<div class="a g" style="left:148px;top:234px;color:#000">14:28 - 18:46</div>
<div class="a g r" style="left:267px;top:234px;width:51px;color:#000">0:04</div>
<div class="a g r" style="left:322px;top:234px;width:81px;color:#000">4:14</div>
<div class="a g r" style="left:431px;top:234px;width:76px;color:#000">105,83 €</div>
<div class="a g r" style="left:511px;top:234px;width:141px;color:#000">CHF 165.10</div>
<div class="a g" style="left:667px;top:234px;color:#000">Ve</div>
<svg class="a" style="left:416px;top:237px" width="14" height="14"><path d="M1.5 1.5L12 7L1.5 12.5Z" fill="#9cbf55" stroke="#9cbf55" stroke-width="1" stroke-linejoin="round"/></svg>
<div class="a g" style="left:46px;top:256px;font-weight:bold;color:#000080;letter-spacing:0.05px;font-size:14.67px">ph (Baubegleitung)</div>
<div class="a" style="left:46px;top:256px;white-space:nowrap;line-height:17px"><span class="g" style="font-weight:bold;letter-spacing:0.05px;font-size:14.67px;visibility:hidden">ph (Baubegleitung)</span><span style="color:#8c8c8c;font-size:11px;margin-left:9px;vertical-align:1px">(15:37h) (Intern: 390,42 €)</span></div>
<div class="a " style="left:28px;top:260px;width:9px;height:9px;border:1px solid #8c8c8c;border-radius:1px;background:linear-gradient(#fff,#dedede)"></div>
<div class="a " style="left:30px;top:264px;width:5px;height:1px;background:#3050a8"></div>
<div class="a " style="left:38px;top:264px;width:6px;height:1px;background:repeating-linear-gradient(90deg,#8a8a8a 0 1px,transparent 1px 2px)"></div>
<div class="a g" style="left:64px;top:277px;color:#000">24.10.2025</div>
<div class="a g" style="left:148px;top:277px;color:#000">00:14 - 15:47</div>
<div class="a " style="left:240px;top:280px;color:#a8b0c8;font-size:11px;white-space:nowrap">(N)</div>
<div class="a g r" style="left:267px;top:277px;width:51px;color:#000"></div>
<div class="a g r" style="left:322px;top:277px;width:81px;color:#000">15:33</div>
<div class="a g r" style="left:431px;top:277px;width:76px;color:#000">388,75 €</div>
<div class="a g r" style="left:511px;top:277px;width:141px;color:#000">0,00 €</div>
<div class="a g" style="left:667px;top:277px;color:#000">Ve</div>
<svg class="a" style="left:416px;top:280px" width="14" height="14"><path d="M1.5 1.5L12 7L1.5 12.5Z" fill="#9cbf55" stroke="#9cbf55" stroke-width="1" stroke-linejoin="round"/></svg>
<div class="a g" style="left:1259px;top:277px;width:79px;text-align:center;color:#000">ph</div>
<div class="a g" style="left:64px;top:298px;color:#000">24.10.2025</div>
<div class="a g" style="left:148px;top:298px;color:#000">16:15 - 16:16</div>
<div class="a g r" style="left:267px;top:298px;width:51px;color:#000"></div>
<div class="a g r" style="left:322px;top:298px;width:81px;color:#000">0:01</div>
<div class="a g r" style="left:431px;top:298px;width:76px;color:#000">0,42 €</div>
<div class="a g r" style="left:511px;top:298px;width:141px;color:#000">0,00 €</div>
<div class="a g" style="left:667px;top:298px;color:#000">Ve</div>
<svg class="a" style="left:416px;top:301px" width="14" height="14"><path d="M1.5 1.5L12 7L1.5 12.5Z" fill="#9cbf55" stroke="#9cbf55" stroke-width="1" stroke-linejoin="round"/></svg>
<div class="a g" style="left:1259px;top:298px;width:79px;text-align:center;color:#000">ph</div>
<div class="a g" style="left:64px;top:319px;color:#000">24.10.2025</div>
<div class="a g" style="left:148px;top:319px;color:#000">16:16 - 16:18</div>
<div class="a g r" style="left:267px;top:319px;width:51px;color:#000"></div>
<div class="a g r" style="left:322px;top:319px;width:81px;color:#000">0:02</div>
<div class="a g r" style="left:431px;top:319px;width:76px;color:#000">0,83 €</div>
<div class="a g r" style="left:511px;top:319px;width:141px;color:#000">0,00 €</div>
<div class="a g" style="left:667px;top:319px;color:#000">Ve</div>
<svg class="a" style="left:416px;top:322px" width="14" height="14"><path d="M1.5 1.5L12 7L1.5 12.5Z" fill="#9cbf55" stroke="#9cbf55" stroke-width="1" stroke-linejoin="round"/></svg>
<div class="a g" style="left:1259px;top:319px;width:79px;text-align:center;color:#000">ph</div>
<div class="a g" style="left:64px;top:340px;color:#fff">27.10.2025</div>
<div class="a g" style="left:148px;top:340px;color:#fff">12:11 - 12:12</div>
<div class="a g r" style="left:267px;top:340px;width:51px;color:#fff"></div>
<div class="a g r" style="left:322px;top:340px;width:81px;color:#fff">0:01</div>
<div class="a g r" style="left:431px;top:340px;width:76px;color:#fff">0,42 €</div>
<div class="a g r" style="left:511px;top:340px;width:141px;color:#fff">0,00 €</div>
<div class="a g" style="left:667px;top:340px;color:#fff">Ve</div>
<svg class="a" style="left:416px;top:343px" width="14" height="14"><path d="M1.5 1.5L12 7L1.5 12.5Z" fill="#1a1a1a" stroke="#1a1a1a" stroke-width="1" stroke-linejoin="round"/></svg>
<div class="a g" style="left:1259px;top:340px;width:79px;text-align:center;color:#fff">ph</div>
<div class="a g" style="left:46px;top:362px;font-weight:bold;color:#000080;letter-spacing:0.05px;font-size:14.67px">ms (Vordimensionierung)</div>
<div class="a" style="left:46px;top:362px;white-space:nowrap;line-height:17px"><span class="g" style="font-weight:bold;letter-spacing:0.05px;font-size:14.67px;visibility:hidden">ms (Vordimensionierung)</span><span style="color:#8c8c8c;font-size:11px;margin-left:9px;vertical-align:1px">(1:27h) (Pause 0:33h) (Intern: 36,25 € / Preis: 95,00 €)</span></div>
<div class="a " style="left:28px;top:366px;width:9px;height:9px;border:1px solid #8c8c8c;border-radius:1px;background:linear-gradient(#fff,#dedede)"></div>
<div class="a " style="left:30px;top:370px;width:5px;height:1px;background:#3050a8"></div>
<div class="a " style="left:38px;top:370px;width:6px;height:1px;background:repeating-linear-gradient(90deg,#8a8a8a 0 1px,transparent 1px 2px)"></div>
<div class="a g" style="left:64px;top:383px;color:#000">24.10.2025</div>
<div class="a g" style="left:148px;top:383px;color:#000">11:21 - 12:54</div>
<div class="a g r" style="left:267px;top:383px;width:51px;color:#000">0:33</div>
<div class="a g r" style="left:322px;top:383px;width:81px;color:#000">1:00</div>
<div class="a g r" style="left:431px;top:383px;width:76px;color:#000">25,00 €</div>
<div class="a g r" style="left:511px;top:383px;width:141px;color:#000">95,00 €</div>
<div class="a g" style="left:667px;top:383px;color:#000">Ve</div>
<svg class="a" style="left:416px;top:386px" width="14" height="14"><path d="M1.5 1.5L12 7L1.5 12.5Z" fill="#9cbf55" stroke="#9cbf55" stroke-width="1" stroke-linejoin="round"/></svg>
<div class="a g" style="left:1259px;top:383px;width:79px;text-align:center;color:#000">ms</div>
<div class="a g" style="left:64px;top:404px;color:#000">24.10.2025</div>
<div class="a g" style="left:148px;top:404px;color:#000">16:18 - 16:19</div>
<div class="a g r" style="left:267px;top:404px;width:51px;color:#000"></div>
<div class="a g r" style="left:322px;top:404px;width:81px;color:#000">0:01</div>
<div class="a g r" style="left:431px;top:404px;width:76px;color:#000">0,42 €</div>
<div class="a g r" style="left:511px;top:404px;width:141px;color:#000">0,00 €</div>
<div class="a g" style="left:667px;top:404px;color:#000">Ve</div>
<svg class="a" style="left:416px;top:407px" width="14" height="14"><path d="M1.5 1.5L12 7L1.5 12.5Z" fill="#9cbf55" stroke="#9cbf55" stroke-width="1" stroke-linejoin="round"/></svg>
<div class="a g" style="left:1259px;top:404px;width:79px;text-align:center;color:#000">ms</div>
<div class="a g" style="left:64px;top:425px;color:#000">24.10.2025</div>
<div class="a g" style="left:148px;top:425px;color:#000">16:19 - 16:44</div>
<div class="a g r" style="left:267px;top:425px;width:51px;color:#000"></div>
<div class="a g r" style="left:322px;top:425px;width:81px;color:#000">0:25</div>
<div class="a g r" style="left:431px;top:425px;width:76px;color:#000">10,42 €</div>
<div class="a g r" style="left:511px;top:425px;width:141px;color:#000">0,00 €</div>
<div class="a g" style="left:667px;top:425px;color:#000">Ve</div>
<svg class="a" style="left:416px;top:428px" width="14" height="14"><path d="M1.5 1.5L12 7L1.5 12.5Z" fill="#9cbf55" stroke="#9cbf55" stroke-width="1" stroke-linejoin="round"/></svg>
<div class="a g" style="left:1259px;top:425px;width:79px;text-align:center;color:#000">ms</div>
<div class="a g" style="left:64px;top:446px;color:#000">27.10.2025</div>
<div class="a g" style="left:148px;top:446px;color:#000">12:09 - 12:10</div>
<div class="a g r" style="left:267px;top:446px;width:51px;color:#000"></div>
<div class="a g r" style="left:322px;top:446px;width:81px;color:#000">0:01</div>
<div class="a g r" style="left:431px;top:446px;width:76px;color:#000">0,42 €</div>
<div class="a g r" style="left:511px;top:446px;width:141px;color:#000">0,00 €</div>
<div class="a g" style="left:667px;top:446px;color:#000">Ve</div>
<svg class="a" style="left:416px;top:449px" width="14" height="14"><path d="M1.5 1.5L12 7L1.5 12.5Z" fill="#9cbf55" stroke="#9cbf55" stroke-width="1" stroke-linejoin="round"/></svg>
<div class="a g" style="left:1259px;top:446px;width:79px;text-align:center;color:#000">ms</div>
<div class="a g" style="left:46px;top:467px;font-weight:bold;color:#808080">Gesamt:</div>
<div class="a g r" style="left:267px;top:467px;width:51px;font-weight:bold;color:#808080">0:37</div>
<div class="a g r" style="left:322px;top:467px;width:81px;font-weight:bold;color:#808080">21:22</div>
<div class="a g r" style="left:431px;top:467px;width:76px;font-weight:bold;color:#808080">534,17 €</div>
<div class="a g r" style="left:511px;top:467px;width:141px;font-weight:bold;color:#808080">Untersch.Währu...</div>
<div class="a" style="left:679px;top:80px;width:174px;height:504px;background:rgba(0,0,0,0.32);filter:blur(1.2px)"></div>
<div class="a " style="left:677px;top:78px;width:174px;height:504px;background:#f9f9f9;border:1px solid #a0a0a0"></div>
<div class="a t12" style="left:708px;top:85px;">Keine</div>
<div class="a " style="left:709px;top:105px;width:139px;height:1px;background:#d7d7d7"></div>
<div class="a t12" style="left:708px;top:113px;">Tag</div>
<div class="a t12" style="left:708px;top:135px;">Woche</div>
<div class="a t12" style="left:708px;top:157px;">Monat</div>
<div class="a t12" style="left:708px;top:179px;">Jahr</div>
<div class="a " style="left:709px;top:199px;width:139px;height:1px;background:#d7d7d7"></div>
<div class="a t12" style="left:708px;top:207px;">Kunde</div>
<div class="a t12" style="left:708px;top:229px;">Hauptprojekt</div>
<div class="a t12" style="left:708px;top:251px;">Projekt</div>
<div class="a t12" style="left:708px;top:273px;">Aufgabe</div>
<div class="a " style="left:709px;top:293px;width:139px;height:1px;background:#d7d7d7"></div>
<div class="a t12" style="left:708px;top:301px;">Kommentar</div>
<div class="a t12" style="left:708px;top:323px;">Ort</div>
<div class="a t12" style="left:708px;top:345px;">Preisgruppe</div>
<div class="a t12" style="left:708px;top:367px;">Tätigkeit</div>
<div class="a " style="left:689px;top:371.5px;width:5px;height:5px;background:#1a1a1a;border-radius:50%"></div>
<div class="a t12" style="left:708px;top:389px;">Projekttyp</div>
<div class="a t12" style="left:708px;top:411px;">Zeitstempelstatus</div>
<div class="a t12" style="left:708px;top:433px;">Ticketnummer</div>
<div class="a " style="left:709px;top:453px;width:139px;height:1px;background:#d7d7d7"></div>
<div class="a t12" style="left:708px;top:461px;">Arbeitsbereich</div>
<div class="a t12" style="left:708px;top:483px;">Arbeitsgang</div>
<div class="a " style="left:709px;top:503px;width:139px;height:1px;background:#d7d7d7"></div>
<div class="a t12" style="left:708px;top:511px;">Rechnung</div>
<div class="a t12" style="left:708px;top:533px;">Projektleistung</div>
<div class="a " style="left:709px;top:553px;width:139px;height:1px;background:#d7d7d7"></div>
<div class="a t12" style="left:708px;top:561px;">Bearbeiter</div>
<svg class="a" style="left:0;top:0" width="1594" height="651">
<g stroke="#e50000" stroke-width="5" stroke-linecap="round" stroke-linejoin="round" fill="none">
<path d="M660 364.8L190.5 268.5M204.5 263.8L190.5 268.5L201.5 277.8"/>
<path d="M657.3 374.3L224.5 369.6M236 363L224.5 369.6L235.5 375.8"/>
<path d="M841.5 364L1255.3 293.7M1241.5 289.5L1255.3 293.7L1244.5 302"/>
<path d="M844.6 374.4L1259.3 404M1247.5 397.5L1259.3 404L1246.8 409.5"/>
</g>
<rect x="671.5" y="359.5" width="159" height="30" fill="none" stroke="#ff3c3c" stroke-width="3"/>
</svg>
<svg class="a" style="left:0;top:0" width="300" height="120"><!-- binoculars -->
<path d="M240 95l2.5-5.5h3l1 1h2l1-1h3l2.5 5.5z" fill="#1e1e1e"/>
<circle cx="242.8" cy="96.2" r="3.6" fill="#1e1e1e"/><circle cx="250.8" cy="96.2" r="3.6" fill="#1e1e1e"/>
<circle cx="242.8" cy="96.2" r="2.3" fill="#3d95d8"/><circle cx="250.8" cy="96.2" r="2.3" fill="#3d95d8"/>
<rect x="241.5" y="94.5" width="1.2" height="1.2" fill="#fff"/><rect x="249.5" y="94.5" width="1.2" height="1.2" fill="#fff"/>
</svg>
<svg class="a" style="left:0;top:0" width="1594" height="120"><path d="M759.5 46.5V62.5L763.3 58.8L766.2 64.6L768.4 63.6L765.6 57.8H770.8Z" fill="#fff" stroke="#111" stroke-width="1.1" stroke-linejoin="round"/></svg></body></html>
